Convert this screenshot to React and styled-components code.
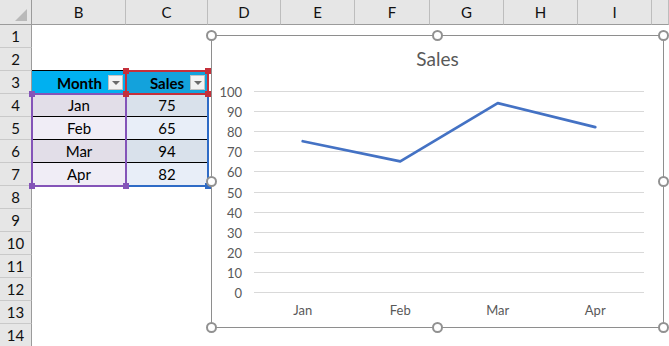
import React from 'react'
import styled, {createGlobalStyle} from 'styled-components'

const GlobalStyle = createGlobalStyle`
  html, body { margin: 0; padding: 0; background: #fff; }
  body { overflow: hidden; }
`

const COLS = ['B', 'C', 'D', 'E', 'F', 'G', 'H', 'I', '']
const ROWS = [1, 2, 3, 4, 5, 6, 7, 8, 9, 10, 11, 12, 13, 14]
const DATA = [
  {month: 'Jan', sales: 75},
  {month: 'Feb', sales: 65},
  {month: 'Mar', sales: 94},
  {month: 'Apr', sales: 82},
]

const Page = styled.div`
  position: relative;
  width: 669px;
  height: 346px;
  overflow: hidden;
  font-family: Lato, "Liberation Sans", sans-serif;
`

const Sheet = styled.div`
  display: grid;
  grid-template-columns: 32px 94px 82px 73px 74px 75px 74px 74px 74px 1fr;
  grid-template-rows: 25px repeat(14, 23px);
  background: #fff;
`

const Corner = styled.div`
  grid-row: 1;
  grid-column: 1;
  position: relative;
  background: #e6e6e6;
  border-right: 1px solid #9b9b9b;
  border-bottom: 1px solid #9b9b9b;
  &::after {
    content: '';
    position: absolute;
    right: 4px;
    bottom: 3px;
    width: 0;
    height: 0;
    border-left: 12px solid transparent;
    border-bottom: 12px solid #b9b9b9;
  }
`

const ColHead = styled.div`
  grid-row: 1;
  grid-column: ${p => p.$col};
  display: flex;
  align-items: center;
  justify-content: center;
  background: #e6e6e6;
  border-right: 1px solid #bdbdbd;
  border-bottom: 1px solid #9b9b9b;
  font-size: 15px;
  color: #111;
`

const RowHead = styled.div`
  grid-row: ${p => p.$row};
  grid-column: 1;
  display: flex;
  align-items: center;
  justify-content: center;
  background: #e6e6e6;
  border-right: 1px solid #9b9b9b;
  border-bottom: 1px solid #c9c9c9;
  font-size: 15px;
  color: #111;
`

const HeadCell = styled.div`
  grid-row: 4;
  grid-column: ${p => p.$col};
  margin-top: -1px;
  display: flex;
  align-items: center;
  justify-content: flex-end;
  gap: 6px;
  padding-right: 3px;
  background: ${p => p.$bg};
  border-top: 1px solid #000;
  font-size: 15px;
  font-weight: 700;
  color: #000;
`

const Dropdown = styled.span`
  width: 15px;
  height: 15px;
  box-sizing: border-box;
  display: flex;
  align-items: center;
  justify-content: center;
  background: #f3f3f3;
  border: 1px solid #c3c3c3;
  &::after {
    content: '';
    border-left: 4px solid transparent;
    border-right: 4px solid transparent;
    border-top: 4px solid #6b6b6b;
    margin-top: 1px;
  }
`

const DataCell = styled.div`
  grid-row: ${p => p.$row};
  grid-column: ${p => p.$col};
  display: flex;
  align-items: center;
  justify-content: center;
  background: ${p => p.$bg};
  border-bottom: 1px solid ${p => (p.$last ? 'transparent' : '#000')};
  font-size: 15px;
  color: #000;
`

const Frame = styled.div`
  grid-row: ${p => p.$rows};
  grid-column: ${p => p.$col};
  margin: -1px;
  position: relative;
  border: 2px solid ${p => p.$color};
  pointer-events: none;
  z-index: 1;
`

const Handle = styled.span`
  position: absolute;
  width: 6px;
  height: 6px;
  background: ${p => p.$color};
  ${p => (p.$top ? 'top: -4px;' : 'bottom: -4px;')}
  ${p => (p.$left ? 'left: -4px;' : 'right: -4px;')}
`

const ChartBox = styled.div`
  position: absolute;
  left: 211px;
  top: 35px;
  width: 453px;
  height: 293px;
  box-sizing: border-box;
  border: 1px solid #8e8e8e;
  background: #fff;
  display: flex;
  flex-direction: column;
  z-index: 2;
`

const ChartTitle = styled.div`
  padding: 12px 0;
  line-height: 22px;
  text-align: center;
  font-size: 19px;
  color: #595959;
`

const Knob = styled.span`
  position: absolute;
  width: 11px;
  height: 11px;
  box-sizing: border-box;
  border-radius: 50%;
  background: #fff;
  border: 2px solid #919191;
  left: ${p => p.$x};
  top: ${p => p.$y};
`

function Frames() {
  const corners = [
    [true, true],
    [true, false],
    [false, true],
    [false, false],
  ]
  const frames = [
    {col: 3, rows: '5 / 9', color: '#2e6bc6'},
    {col: 2, rows: '5 / 9', color: '#8454b8'},
    {col: 3, rows: '4 / 5', color: '#c5303b'},
  ]
  return frames.map((f, i) => (
    <Frame key={i} $col={f.col} $rows={f.rows} $color={f.color}>
      {corners.map(([t, l], j) => (
        <Handle key={j} $top={t} $left={l} $color={f.color} />
      ))}
    </Frame>
  ))
}

function Chart() {
  const y = v => 210 - v * 2.01
  const ticks = [0, 10, 20, 30, 40, 50, 60, 70, 80, 90, 100]
  const xs = [90.75, 188.25, 285.75, 383.25]
  const pts = DATA.map((d, i) => `${xs[i]},${y(d.sales)}`).join(' ')
  const knobs = [
    ['-6px', '-6px'], ['calc(50% - 6px)', '-6px'], ['calc(100% - 5px)', '-6px'],
    ['-6px', 'calc(50% - 6px)'], ['calc(100% - 5px)', 'calc(50% - 6px)'],
    ['-6px', 'calc(100% - 5px)'], ['calc(50% - 6px)', 'calc(100% - 5px)'], ['calc(100% - 5px)', 'calc(100% - 5px)'],
  ]
  return (
    <ChartBox>
      <ChartTitle>Sales</ChartTitle>
      <svg width="451" height="245" style={{display: 'block'}}>
        {ticks.map(t => {
          const ty = Math.round(y(t)) + 0.5
          return (
            <g key={t}>
              <line x1="42" x2="432" y1={ty} y2={ty} stroke="#d9d9d9" strokeWidth="1" />
              <text x="30" y={ty} textAnchor="end" dominantBaseline="central"
                fontFamily="Lato, sans-serif" fontSize="13" fill="#595959">{t}</text>
            </g>
          )
        })}
        {DATA.map((d, i) => (
          <text key={d.month} x={xs[i]} y="228" textAnchor="middle" dominantBaseline="central"
            fontFamily="Lato, sans-serif" fontSize="13" fill="#595959">{d.month}</text>
        ))}
        <polyline points={pts} fill="none" stroke="#4472c4" strokeWidth="2.75"
          strokeLinejoin="round" strokeLinecap="round" />
      </svg>
      {knobs.map(([x, yy], i) => <Knob key={i} $x={x} $y={yy} />)}
    </ChartBox>
  )
}

export default function App() {
  return (
    <Page>
      <GlobalStyle />
      <Sheet>
        <Corner />
        {COLS.map((c, i) => <ColHead key={i} $col={i + 2}>{c}</ColHead>)}
        {ROWS.map(r => <RowHead key={r} $row={r + 1}>{r}</RowHead>)}
        <HeadCell $col={2} $bg="#00b0f0">Month<Dropdown /></HeadCell>
        <HeadCell $col={3} $bg="#13a2dc">Sales<Dropdown /></HeadCell>
        {DATA.map((d, i) => (
          <React.Fragment key={d.month}>
            <DataCell $row={i + 5} $col={2} $bg={i % 2 ? '#f0edf6' : '#e2dee8'} $last={i === 3}>{d.month}</DataCell>
            <DataCell $row={i + 5} $col={3} $bg={i % 2 ? '#e8eef8' : '#d9e1eb'} $last={i === 3}>{d.sales}</DataCell>
          </React.Fragment>
        ))}
        <Frames />
      </Sheet>
      <Chart />
    </Page>
  )
}
